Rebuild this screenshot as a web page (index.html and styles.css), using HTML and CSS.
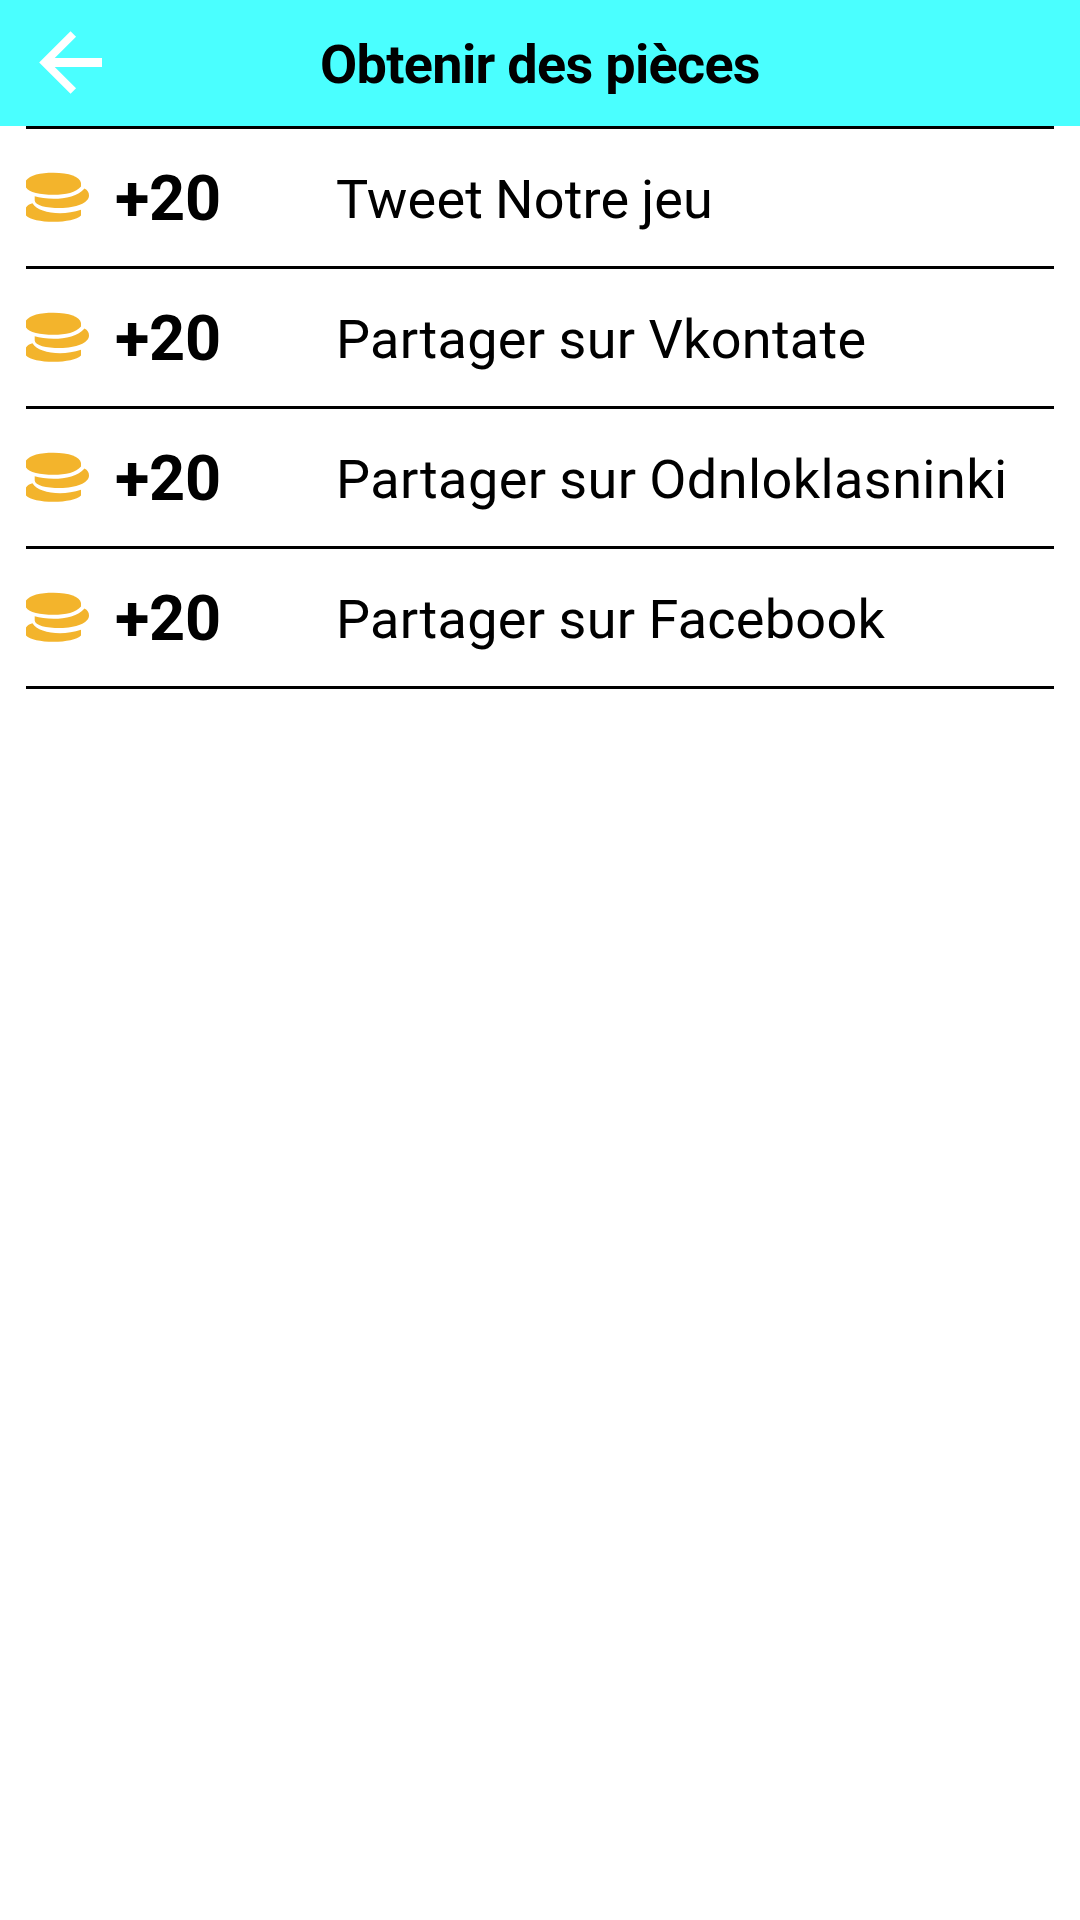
FILE: index.html
```html
<!DOCTYPE html>
<html lang="fr">
<head>
<meta charset="utf-8">
<title>Obtenir des pièces</title>
<link rel="stylesheet" href="styles.css">
</head>
<body>
<svg class="defs" width="0" height="0" aria-hidden="true">
  <symbol id="coins" viewBox="0 0 63 51">
    <path d="M0 8.500C4 3 14 .7 27.500 .7C43 .7 54 4.500 55 11V14.500C50 20.500 40 22.800 27.500 22.800C14 22.800 3 20.500 0 15.500Z"/>
    <path d="M8.700 24.300C22 28.500 49 28.500 58.500 16.500C61.500 18 63 20.500 63 23.500C63 31 50 36 34 36C20 36 9 33.500 8.700 28.500Z"/>
    <path d="M0 35.500C1.500 33.500 3.500 32 6.500 31.300C12 41 36 44.300 55 37.800V43.500C51 47.500 40 49.800 27.500 49.800C14.500 49.800 4 47.500 0 43.500Z"/>
  </symbol>
</svg>
<header class="header">
  <a class="back" aria-label="Retour">
    <svg width="64" height="63" viewBox="0 0 64 63" fill="none" stroke="#fff"><path stroke-width="9" d="M63 31.500H7"/><path stroke-width="7.800" d="M34.300 2.900L5.700 31.500L34.300 60.100"/></svg>
  </a>
  <h1 class="title">Obtenir des pièces</h1>
</header>
<ul class="rewards">
  <li class="reward"><svg class="coin"><use href="#coins"/></svg><b class="amount">+20</b><span class="label label-tweet">Tweet Notre jeu</span></li>
  <li class="reward"><svg class="coin"><use href="#coins"/></svg><b class="amount">+20</b><span class="label">Partager sur Vkontate</span></li>
  <li class="reward"><svg class="coin"><use href="#coins"/></svg><b class="amount">+20</b><span class="label label-wide">Partager sur Odnloklasninki</span></li>
  <li class="reward"><svg class="coin"><use href="#coins"/></svg><b class="amount">+20</b><span class="label">Partager sur Facebook</span></li>
</ul>
</body>
</html>
```
FILE: styles.css
```css
* { box-sizing: border-box; }
body {
  margin: 0;
  min-height: 1920px;
  background: #fff;
  color: #000;
  font-family: Roboto, sans-serif;
}
.defs { display: none; }
.header {
  display: grid;
  grid-template-columns: 126px 1fr 126px;
  align-items: center;
  height: 126px;
  background: #4affff;
}
.back { display: flex; padding: 0 0 1px 38.500px; }
.title {
  margin: 0;
  padding-top: 4px;
  text-align: center;
  font-size: 54px;
  font-weight: 700;
  line-height: 64px;
  letter-spacing: -0.7px;
}
.rewards {
  margin: 0 26px;
  padding: 0;
  list-style: none;
  border-top: 3px solid #000;
}
.reward {
  display: grid;
  grid-template-columns: 63px 26px 221px 1fr;
  align-items: center;
  height: 140px;
  border-bottom: 3px solid #000;
}
.coin { width: 63px; height: 51px; fill: #f3b42c; }
.amount {
  grid-column: 3;
  padding-top: 2px;
  font-size: 63px;
  line-height: 74px;
  letter-spacing: -0.3px;
}
.label {
  padding-top: 5px;
  font-size: 54px;
  line-height: 64px;
  letter-spacing: 0.28px;
  word-spacing: -0.5px;
  white-space: nowrap;
}
.label-tweet {
  letter-spacing: 0.15px;
  word-spacing: -1.500px;
}
.label-wide {
  letter-spacing: 0.42px;
  word-spacing: -1px;
}
```
